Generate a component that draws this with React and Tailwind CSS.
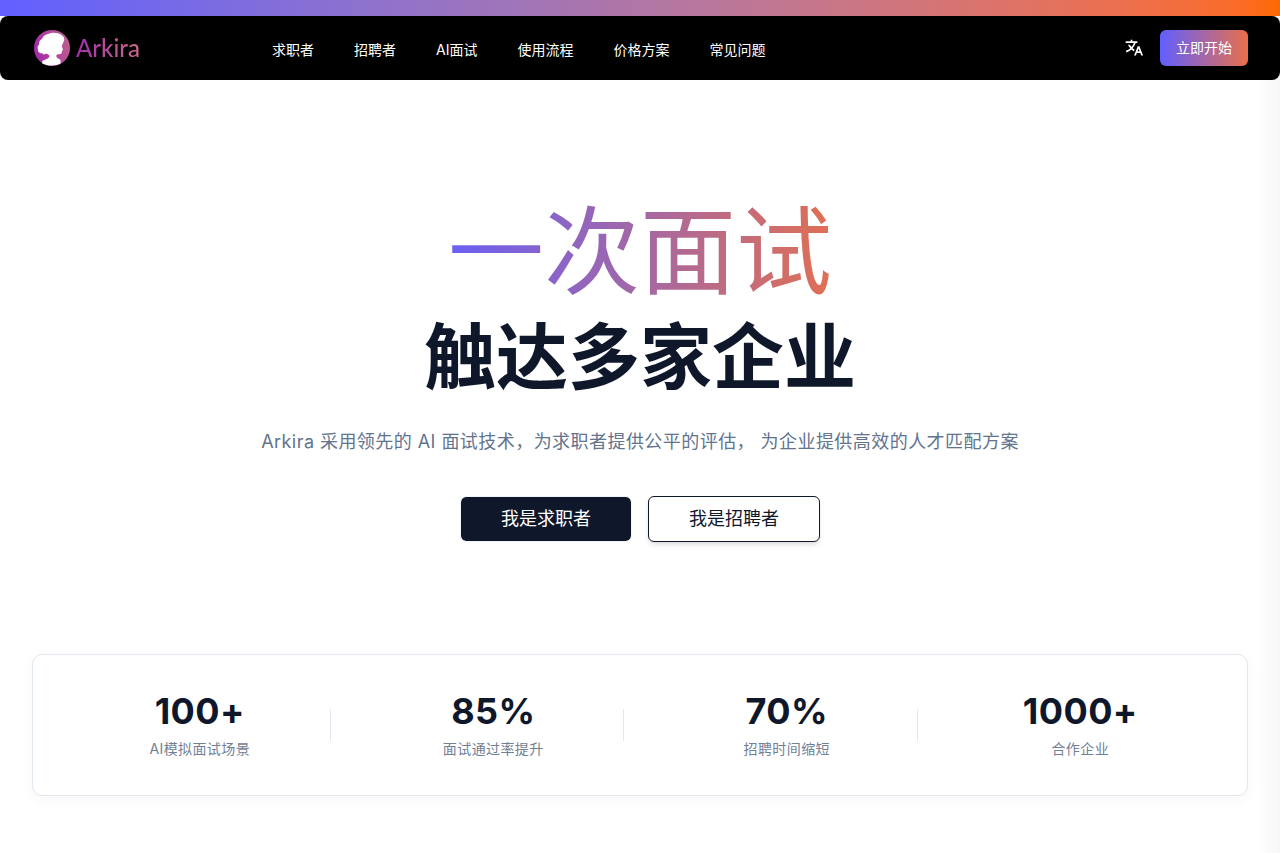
import { RiTranslate2 } from "react-icons/ri";

const navItems = [
  { label: "求职者", href: "#candidates" },
  { label: "招聘者", href: "#recruiters" },
  { label: "AI面试", href: "#interview" },
  { label: "使用流程", href: "#process" },
  { label: "价格方案", href: "#pricing" },
  { label: "常见问题", href: "#faq" },
];

const stats = [
  { value: "100+", label: "AI模拟面试场景" },
  { value: "85%", label: "面试通过率提升" },
  { value: "70%", label: "招聘时间缩短" },
  { value: "1000+", label: "合作企业" },
];

function Logo() {
  return (
    <a href="#top" aria-label="Arkira" className="flex items-center gap-1.5">
      <svg viewBox="0 0 36 36" className="size-9" aria-hidden="true">
        <defs>
          <linearGradient id="badge" x1="0" y1="0.6" x2="1" y2="0.3">
            <stop offset="0" stopColor="#a32aa8" />
            <stop offset="1" stopColor="#bd5f8e" />
          </linearGradient>
        </defs>
        <circle cx="18" cy="18" r="18" fill="url(#badge)" />
        <path
          fill="#fff"
          d="M14 4C18 2 24 2.300 27.500 5C30.300 6.800 31 9.500 29.500 12C28.500 13.500 28.300 15 27.800 16.500L29 19.500C28.800 20.300 28 20.500 28 21.500C27.800 23.300 27 24.300 25.500 24.300C23.500 24 22.300 24.500 22.300 26C22.500 28 24.500 28.800 26.500 29.800L26.500 33.500C22 36.200 13.500 36.200 8 33.200L8.500 30.800C12 29.500 15.300 28.500 15.500 26C15 24.500 13.500 24 12 23.500C10.500 25 8.500 24.500 8.300 23.300C6 23.500 3.500 22 4 19.500C3 17.500 4 15.500 5.200 14.500C4.800 12 6 10 8 9C8.800 6.500 11 4.500 14 4Z"
        />
      </svg>
      <span className="bg-linear-to-r from-[#a32aa8] to-[#c9688a] bg-clip-text font-['Lato',sans-serif] text-2xl leading-8 font-medium text-transparent">
        Arkira
      </span>
    </a>
  );
}

function Header() {
  return (
    <header className="flex h-16 items-center rounded-lg bg-black px-8 text-white">
      <div className="w-60 pl-0.5">
        <Logo />
      </div>
      <nav className="flex flex-1 items-center gap-10 pt-1 text-sm">
        {navItems.map((item) => (
          <a key={item.label} href={item.href}>
            {item.label}
          </a>
        ))}
      </nav>
      <div className="flex items-center gap-4">
        <button type="button" aria-label="切换语言">
          <RiTranslate2 className="size-5" />
        </button>
        <button
          type="button"
          className="h-9 rounded-md bg-linear-to-r/srgb from-[#615fff] to-[#e8704a] px-4 text-sm"
        >
          立即开始
        </button>
      </div>
    </header>
  );
}

function Hero() {
  return (
    <section className="flex flex-col items-center pt-28 text-center">
      <h1 className="text-[#0f172b]">
        <span className="block bg-linear-to-r/srgb from-[#615fff] to-[#e8704a] bg-clip-text text-8xl leading-[118px] text-transparent">
          一次面试
        </span>
        <span className="block text-7xl leading-[94px] font-bold">触达多家企业</span>
      </h1>
      <p className="mt-6 text-lg leading-7 tracking-wide text-[#62748e]">
        Arkira 采用领先的 AI 面试技术，为求职者提供公平的评估， 为企业提供高效的人才匹配方案
      </p>
      <div className="mt-10 flex items-center gap-4">
        <button
          type="button"
          className="rounded-md border border-[#f1f5f9] bg-[#0f172b] bg-clip-padding px-10 py-2 text-lg text-white"
        >
          我是求职者
        </button>
        <button
          type="button"
          className="rounded-md border border-[#0f172b] bg-white px-10 py-2 text-lg text-[#0f172b] shadow-md"
        >
          我是招聘者
        </button>
      </div>
    </section>
  );
}

function Stats() {
  return (
    <section className="mx-8 mt-28 grid grid-cols-4 gap-6 rounded-[10px] border border-[#e2e8f0] bg-white p-8 shadow-[0_4px_16px_rgba(15,23,42,0.04)]">
      {stats.map((stat) => (
        <div key={stat.label} className="group flex items-center px-1">
          <div className="flex-1 text-center tracking-wide">
            <div className="text-4xl leading-12 font-bold text-[#0f172b]">{stat.value}</div>
            <div className="text-sm leading-7 text-[#718096]">{stat.label}</div>
          </div>
          <div className="-ml-px h-8 w-px bg-[#e2e8f0] group-last:hidden" />
        </div>
      ))}
    </section>
  );
}

export default function App() {
  return (
    <div
      id="top"
      className="min-h-screen bg-[linear-gradient(to_left,#f7f7f7,#fff_24px)] pb-14 font-['Inter','Noto_Sans_CJK_SC',sans-serif]"
    >
      <div className="h-4 bg-linear-to-r from-[#615fff] to-[#ff6900]" />
      <Header />
      <main>
        <Hero />
        <Stats />
      </main>
    </div>
  );
}
